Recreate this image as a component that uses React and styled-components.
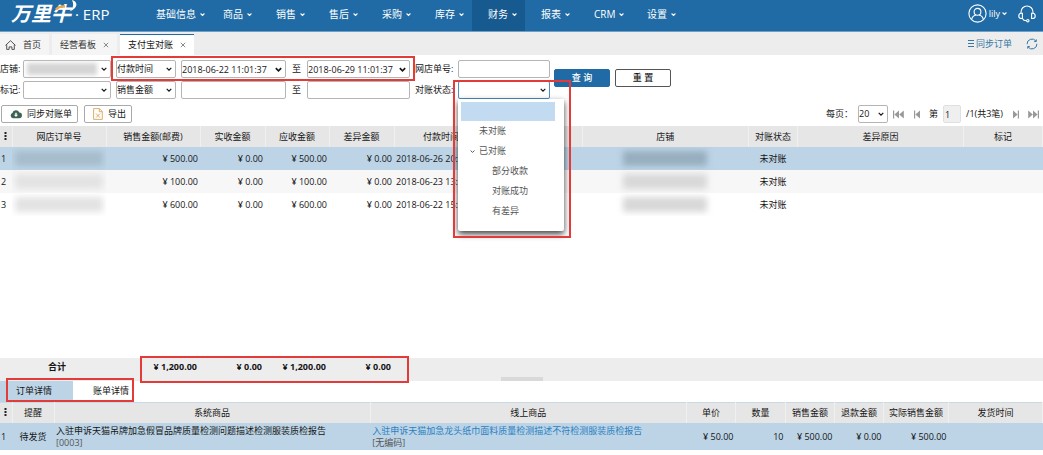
import React, { useState } from "react";
import styled, { createGlobalStyle } from "styled-components";

const GlobalStyle = createGlobalStyle`
  * {
    box-sizing: border-box;
  }

  body {
    margin: 0;
    background: #fff;
    color: #151515;
    font-family: "Open Sans", "Noto Sans CJK SC", sans-serif;
    font-size: 9px;
    line-height: 12px;
  }

  button,
  input,
  select {
    font: inherit;
    color: inherit;
  }
`;

const Page = styled.div`
  display: flex;
  flex-direction: column;
  min-height: 100vh;
  padding-bottom: 5px;
`;

/* ---------- header ---------- */

const Header = styled.header`
  display: flex;
  height: 32px;
  background: #206ba5;
  border-bottom: 1px solid #6f9fc4;
  color: #fff;
`;

const Brand = styled.a`
  position: relative;
  display: flex;
  width: 140px;
  padding-left: 11px;
  color: #fff;
  text-decoration: none;
`;

const BrandName = styled.span`
  width: 64px;
  font-family: "Noto Sans CJK SC", sans-serif;
  font-size: 20px;
  font-style: italic;
  font-weight: 700;
  line-height: 26px;
  white-space: nowrap;
`;

const BrandHorn = styled.svg`
  position: absolute;
  left: 54px;
  top: 0;
`;

const BrandSuffix = styled.span`
  font-size: 15px;
  line-height: 28px;
  white-space: nowrap;
`;

const Nav = styled.nav`
  display: flex;
  flex: 1;
`;

const NavItem = styled.a`
  display: flex;
  align-items: center;
  gap: 4px;
  width: ${(props) => (props.$wide ? "67px" : "53px")};
  padding: 0 0 3px 16px;
  background: ${(props) => (props.$active ? "#165a8f" : "transparent")};
  color: #fff;
  font-size: 10px;
  text-decoration: none;
  white-space: nowrap;
`;

const UserArea = styled.div`
  display: flex;
  align-items: center;
  padding: 0 7px 4px 0;
`;

const UserButton = styled.button`
  display: flex;
  align-items: center;
  gap: 2px;
  margin-right: 11px;
  padding: 0;
  border: 0;
  background: none;
`;

const IconButton = styled.button`
  display: flex;
  align-items: center;
  justify-content: center;
  padding: 0;
  border: 0;
  background: none;
`;

/* ---------- page tabs ---------- */

const TabBar = styled.div`
  display: flex;
  align-items: flex-end;
  height: 23px;
  background: #ededed;
`;

const PageTab = styled.div`
  display: flex;
  align-items: center;
  gap: 7px;
  height: 21px;
  margin-right: 3px;
  padding: 0 ${(props) => (props.$home ? "8px 0 5px" : "8px")};
  border-top: 1px solid ${(props) => (props.$active ? "#206ba5" : "#f5f5f5")};
  background: ${(props) => (props.$active ? "#fff" : "#f5f5f5")};
  color: ${(props) => (props.$active ? "#111" : "#333")};
  white-space: nowrap;
`;

const TabText = styled.button`
  padding: 0;
  border: 0;
  background: none;
`;

const TabTools = styled.div`
  display: flex;
  align-items: center;
  align-self: stretch;
  gap: 14px;
  margin-left: auto;
  padding-right: 5px;
  color: #3878a5;
`;

const SyncLink = styled.a`
  display: flex;
  align-items: center;
  gap: 2px;
  color: #3878a5;
  text-decoration: none;
`;

/* ---------- filters ---------- */

const Filters = styled.form`
  display: flex;
  align-items: center;
  gap: 4px;
  padding-top: 5px;
`;

const FilterRows = styled.div`
  display: flex;
  flex-direction: column;
  gap: 3px;
`;

const FilterRow = styled.div`
  display: flex;
  align-items: center;
  gap: 5px;
`;

const FieldGroup = styled.div`
  position: relative;
  display: flex;
  align-items: center;
  gap: 5px;
`;

const FieldLabel = styled.label`
  flex: none;
  width: ${(props) => props.$width}px;
  white-space: nowrap;
`;

const RangeText = styled.span`
  width: 11px;
  text-align: center;
`;

const Control = styled.div`
  position: relative;
  flex: none;
  width: ${(props) => props.$width}px;
  height: 18px;

  & > svg {
    position: absolute;
    right: 4px;
    top: 6px;
    pointer-events: none;
  }
`;

const controlFrame = `
  display: block;
  width: 100%;
  height: 18px;
  border-radius: 2px;
  outline: none;
`;

const Select = styled.select`
  ${controlFrame}
  appearance: none;
  padding: 0;
  border: 1px solid ${(props) => (props.$focused ? "#4a8fc5" : "#b5b5b5")};
  background: #fff;
`;

const TextInput = styled.input`
  ${controlFrame}
  padding: 0 ${(props) => (props.$picker ? "15px 0 0" : "1px")};
  border: 1px solid #b5b5b5;
  background: #fff;

  &:disabled {
    border-color: #e0e0e0;
    background: #efefef;
    color: #222;
  }
`;

const StoreMask = styled.span`
  position: absolute;
  left: 4px;
  top: 3px;
  width: 70px;
  height: 12px;
  background: #d5d5d5;
  filter: blur(2px);
`;

const Actions = styled.div`
  display: flex;
  gap: 5px;
  padding-bottom: 4px;
`;

const ActionButton = styled.button`
  width: 56px;
  height: 18px;
  padding: 0;
  border: 1px solid ${(props) => (props.$primary ? "#206ba5" : "#555")};
  border-radius: 2px;
  background: ${(props) => (props.$primary ? "#206ba5" : "#fff")};
  color: ${(props) => (props.$primary ? "#fff" : "#111")};
  font-weight: 500;
`;

const Highlight = styled.div`
  position: absolute;
  z-index: 5;
  inset: ${(props) => props.$inset};
  width: ${(props) => props.$width || "auto"};
  border: 2px solid #e33a3a;
  pointer-events: none;
`;

/* ---------- status menu ---------- */

const StatusMenu = styled.ul`
  position: absolute;
  z-index: 4;
  left: 0;
  top: 18px;
  display: flex;
  flex-direction: column;
  width: 106px;
  height: 132px;
  margin: 0;
  padding: 3px;
  border-radius: 0 0 2px 2px;
  background: #fff;
  box-shadow: 0 3px 6px rgba(0, 0, 0, 0.75);
  color: #555;
  list-style: none;
`;

const StatusOption = styled.li`
  display: flex;
  align-items: center;
  gap: 4px;
  height: 20px;
  padding-left: ${(props) => props.$indent}px;
`;

const StatusBlank = styled(StatusOption)`
  width: 94px;
  height: 19px;
  background: #c2dbf0;
`;

/* ---------- toolbar ---------- */

const Toolbar = styled.div`
  display: flex;
  align-items: center;
  gap: 6px;
  padding: 6px 4px 3px 1px;
`;

const ToolButton = styled.button`
  display: flex;
  align-items: center;
  gap: 5px;
  height: 18px;
  padding: 0 5px 0 8px;
  border: 1px solid #aaa;
  border-radius: 2px;
  background: #fff;
  white-space: nowrap;
`;

const Pager = styled.div`
  display: flex;
  align-items: center;
  gap: 5px;
  margin-left: auto;
  white-space: nowrap;
`;

const PagerButton = styled(IconButton)`
  width: ${(props) => (props.$wide ? "11px" : "15px")};
  color: #999;
`;

/* ---------- tables ---------- */

const GridArea = styled.main`
  flex: 1;
`;

const Table = styled.table`
  width: 100%;
  border-collapse: collapse;
  table-layout: fixed;
`;

const Th = styled.th`
  height: 21px;
  padding: 0;
  border-right: 1px solid #f0f0f0;
  background: #e6e6e6;
  font-weight: 400;
  white-space: nowrap;
`;

const Tr = styled.tr`
  height: ${(props) => (props.$tall ? "27px" : "23px")};
  background: ${(props) => props.$bg || "#fff"};
`;

const Td = styled.td`
  padding: 0 2px;
  overflow: hidden;
  text-align: ${(props) => props.$align || "left"};
  white-space: nowrap;
`;

const IndexTd = styled(Td)`
  padding: 0 1px;
`;

const Mask = styled.span`
  display: block;
  height: 15px;
  margin: 0 1px;
  background: ${(props) => (props.$dark ? "#a6bccc" : "#e3e3e3")};
  filter: blur(3px);
`;

const ShopMask = styled(Mask)`
  width: 84px;
  margin: 0 auto;
  background: ${(props) => (props.$dark ? "#97aebf" : "#d8d8d8")};
`;

const Summary = styled.div`
  position: relative;
  height: 23px;
  background: #ededed;
`;

const SummaryCell = styled.td`
  height: 19px;
  padding: 0 ${(props) => (props.$align ? "4px" : "3px")} 0 0;
  font-weight: 700;
  text-align: ${(props) => props.$align || "right"};
  white-space: nowrap;
`;

const ResizeHandle = styled.div`
  width: 42px;
  height: 4px;
  margin: 0 auto;
  background: #d9d9d9;
`;

const DetailTabs = styled.div`
  position: relative;
  display: flex;
  height: 21px;
`;

const DetailTab = styled.button`
  width: 73px;
  padding: 0 0 0 ${(props) => (props.$active ? "16px" : "20px")};
  border: 0;
  background: ${(props) => (props.$active ? "#bcd4e6" : "#fff")};
  text-align: left;
  white-space: nowrap;
`;

const DetailTable = styled(Table)`
  border-top: 1px solid #c9dae7;
`;

const ProductLink = styled.a`
  color: #2b7fc1;
  text-decoration: none;
`;

const ProductCode = styled.div`
  color: #555;
`;

/* ---------- icons ---------- */

const Chevron = ({ size = 6, width = 1.2 }) => (
  <svg width={size} height={size} viewBox="0 0 6 6" fill="none" stroke="currentColor" strokeWidth={width}>
    <path d="M.7 1.8 3 4.1 5.3 1.8" />
  </svg>
);

const UserIcon = () => (
  <svg width="19" height="19" viewBox="0 0 19 19" fill="none" stroke="currentColor" strokeWidth="1.1">
    <circle cx="9.5" cy="9.5" r="8.6" />
    <circle cx="9.5" cy="7.8" r="3.4" />
    <path d="M3.6 15.7c.5-3 2.2-4.2 4.3-4.7M15.4 15.7c-.5-3-2.2-4.2-4.3-4.7" />
  </svg>
);

const HeadsetIcon = () => (
  <svg width="18" height="18" viewBox="0 0 18 18" fill="none" stroke="currentColor" strokeWidth="1.1">
    <path d="M3 8.4V7a6 6 0 0 1 12 0v1.4" />
    <path d="M4.4 8.3v5.2h-.9c-1.7 0-2.7-1.1-2.7-2.6s1-2.6 2.7-2.6zM13.6 8.3v5.2h.9c1.7 0 2.7-1.1 2.7-2.6s-1-2.6-2.7-2.6z" />
    <path d="M4.4 13.5c.7 1.4 2.2 2.2 4 2.2" />
    <circle cx="9.8" cy="15.7" r="1.2" />
  </svg>
);

const HomeIcon = () => (
  <svg width="11" height="10" viewBox="0 0 11 10" fill="none" stroke="#444" strokeWidth=".9">
    <path d="M.5 5.4 5.5.7l5 4.7M1.7 4.5v4.9h2.4V6.9h2.8v2.5h2.4V4.5" />
  </svg>
);

const CloseIcon = () => (
  <svg width="6" height="6" viewBox="0 0 6 6" stroke="#888" strokeWidth="1">
    <path d="M.8.8 5.2 5.2M5.2.8.8 5.2" />
  </svg>
);

const ListIcon = () => (
  <svg width="6" height="7" viewBox="0 0 6 7" stroke="currentColor" strokeWidth="1">
    <path d="M0 .5h6M0 3.5h6M0 6.5h6" />
  </svg>
);

const RefreshIcon = () => (
  <svg width="12" height="12" viewBox="0 0 12 12" fill="none" stroke="currentColor" strokeWidth="1">
    <path d="M1.1 6.2A4.9 4.9 0 0 1 9.9 3M10.9 5.8A4.9 4.9 0 0 1 2.1 9" />
    <path d="M8.2 3.6 10.3 3.5V1.4M3.8 8.4 1.7 8.5v2.1" />
  </svg>
);

const CloudIcon = () => (
  <svg width="12" height="10" viewBox="0 0 12 10">
    <path fill="#3c6354" d="M3 9.2A2.7 2.7 0 0 1 2.4 4 3.6 3.6 0 0 1 9.3 3.6 2.8 2.8 0 0 1 9 9.2z" />
    <path fill="#fff" d="M5.3 3.8h1.4v1.9h1.4L6 8 3.9 5.7h1.4z" />
  </svg>
);

const ExportIcon = () => (
  <svg width="10" height="12" viewBox="0 0 10 12" fill="none" stroke="#d9a658" strokeWidth=".9">
    <path d="M.6.6h5.8l2.9 3v7.8H.6zM6.3.6v3.1h3M3 5.5l4 4.2M7 5.5 3 9.7" />
  </svg>
);

const DotsIcon = () => (
  <svg width="3" height="8" viewBox="0 0 3 8" fill="#222">
    <path d="M.5 0h2v2h-2zM.5 3h2v2h-2zM.5 6h2v2h-2z" />
  </svg>
);

const StepIcon = ({ double, forward }) => {
  const width = double ? 11 : 6;
  return (
    <svg width={width} height="9" viewBox={`0 0 ${width} 9`} fill="currentColor">
      <g transform={forward ? `matrix(-1 0 0 1 ${width} 0)` : undefined}>
        <path d="M0 .5h1.2v8H0zM6 .5v8L1.4 4.5z" />
        {double && <path d="M10.8.5v8L6.2 4.5z" />}
      </g>
    </svg>
  );
};

/* ---------- data ---------- */

const menus = ["基础信息", "商品", "销售", "售后", "采购", "库存", "财务", "报表", "CRM", "设置"];

const orderColumns = [
  { title: "网店订单号", width: 94 },
  { title: "销售金额(邮费)", width: 94 },
  { title: "实收金额", width: 65 },
  { title: "应收金额", width: 64 },
  { title: "差异金额", width: 65 },
  { title: "付款时间", width: 94 },
  { title: "", width: 94 },
  { title: "店铺" },
  { title: "对账状态", width: 49 },
  { title: "差异原因", width: 166 },
  { title: "标记", width: 79 },
];

const orders = [
  { amount: "¥ 500.00", diff: "¥ 0.00", time: "2018-06-26 20:14:52", bg: "#bcd4e6" },
  { amount: "¥ 100.00", diff: "¥ 0.00", time: "2018-06-23 13:40:16", bg: "#f7f7f7" },
  { amount: "¥ 600.00", diff: "¥ 0.00", time: "2018-06-22 15:22:08", bg: "#fff" },
];

const detailColumns = [
  { title: "提醒", width: 42 },
  { title: "系统商品" },
  { title: "线上商品" },
  { title: "单价", width: 49 },
  { title: "数量", width: 50 },
  { title: "销售金额", width: 49 },
  { title: "退款金额", width: 49 },
  { title: "实际销售金额", width: 65 },
  { title: "发货时间", width: 94 },
];

const Columns = ({ columns }) => (
  <colgroup>
    <col width="12" />
    {columns.map((column, i) => (
      <col key={i} width={column.width} />
    ))}
  </colgroup>
);

const HeadRow = ({ columns }) => (
  <thead>
    <tr>
      <Th aria-label="列设置">
        <DotsIcon />
      </Th>
      {columns.map((column, i) => (
        <Th key={i}>{column.title}</Th>
      ))}
    </tr>
  </thead>
);

const Dropdown = ({ width, text = "", focused, children, ...rest }) => (
  <Control $width={width}>
    <Select $focused={focused} {...rest}>
      <option>{text}</option>
    </Select>
    <Chevron />
    {children}
  </Control>
);

const DatePicker = ({ width, label, initial }) => {
  const [value, setValue] = useState(initial);
  return (
    <Control $width={width}>
      <TextInput $picker aria-label={label} value={value} onChange={(e) => setValue(e.target.value)} />
      <Chevron size={7} width={1.4} />
    </Control>
  );
};

const TopHeader = () => (
  <Header>
    <Brand href="#">
      <BrandName>万里牛</BrandName>
      <BrandHorn width="24" height="16" viewBox="0 0 24 16" fill="none">
        <path d="M18 0c6 1.5 6.5 8-2.5 11.5 4-3.500 4.5-7.5 2.5-11.5z" fill="#fff" />
        <path d="M2 9.5c2-2.5 4.5-3.5 9-3" stroke="#e9a64a" strokeWidth="2.4" />
      </BrandHorn>
      <BrandSuffix>· ERP</BrandSuffix>
    </Brand>
    <Nav>
      {menus.map((menu, i) => (
        <NavItem key={menu} href="#" $wide={i === 0} $active={menu === "财务"}>
          {menu}
          <Chevron size={5} width={1.3} />
        </NavItem>
      ))}
    </Nav>
    <UserArea>
      <UserButton>
        <UserIcon />
        lily
        <Chevron size={5} width={1.3} />
      </UserButton>
      <IconButton aria-label="客服">
        <HeadsetIcon />
      </IconButton>
    </UserArea>
  </Header>
);

const PageTabs = () => (
  <TabBar>
    <PageTab $home>
      <HomeIcon />
      <TabText>首页</TabText>
    </PageTab>
    <PageTab>
      <TabText>经营看板</TabText>
      <IconButton aria-label="关闭经营看板">
        <CloseIcon />
      </IconButton>
    </PageTab>
    <PageTab $active>
      <TabText>支付宝对账</TabText>
      <IconButton aria-label="关闭支付宝对账">
        <CloseIcon />
      </IconButton>
    </PageTab>
    <TabTools>
      <SyncLink href="#">
        <ListIcon />
        同步订单
      </SyncLink>
      <IconButton aria-label="刷新">
        <RefreshIcon />
      </IconButton>
    </TabTools>
  </TabBar>
);

const FilterBar = () => (
  <Filters onSubmit={(e) => e.preventDefault()}>
    <FilterRows>
      <FilterRow>
        <FieldLabel $width={18} htmlFor="store">店铺:</FieldLabel>
        <Dropdown id="store" width={88}>
          <StoreMask />
        </Dropdown>
        <FieldGroup>
          <Dropdown width={60} text="付款时间" aria-label="时间类型" />
          <DatePicker width={105} label="开始时间" initial="2018-06-22 11:01:37" />
          <RangeText>至</RangeText>
          <DatePicker width={103} label="结束时间" initial="2018-06-29 11:01:37" />
          <Highlight $inset="-4px -5px -3px -5px" />
        </FieldGroup>
        <FieldLabel $width={38} htmlFor="order-no">网店单号:</FieldLabel>
        <Control $width={92}>
          <TextInput id="order-no" />
        </Control>
      </FilterRow>
      <FilterRow>
        <FieldLabel $width={18} htmlFor="mark">标记:</FieldLabel>
        <Dropdown id="mark" width={88} />
        <FieldGroup>
          <Dropdown width={60} text="销售金额" aria-label="金额类型" />
          <Control $width={105}>
            <TextInput aria-label="最小金额" />
          </Control>
          <RangeText>至</RangeText>
          <Control $width={103}>
            <TextInput aria-label="最大金额" />
          </Control>
        </FieldGroup>
        <FieldLabel $width={38} htmlFor="status">对账状态:</FieldLabel>
        <Dropdown id="status" width={92} focused>
          <StatusMenu>
            <StatusBlank />
            <StatusOption $indent={18}>未对账</StatusOption>
            <StatusOption $indent={9}>
              <Chevron size={5} />
              已对账
            </StatusOption>
            <StatusOption $indent={31}>部分收款</StatusOption>
            <StatusOption $indent={31}>对账成功</StatusOption>
            <StatusOption $indent={31}>有差异</StatusOption>
          </StatusMenu>
          <Highlight $inset="-1px -21px -139px -5px" />
        </Dropdown>
      </FilterRow>
    </FilterRows>
    <Actions>
      <ActionButton $primary type="submit">查 询</ActionButton>
      <ActionButton type="reset">重 置</ActionButton>
    </Actions>
  </Filters>
);

const GridToolbar = () => (
  <Toolbar>
    <ToolButton>
      <CloudIcon />
      同步对账单
    </ToolButton>
    <ToolButton>
      <ExportIcon />
      导出
    </ToolButton>
    <Pager>
      <label htmlFor="page-size">每页：</label>
      <Dropdown id="page-size" width={30} text="20" />
      <PagerButton $wide aria-label="首页">
        <StepIcon double />
      </PagerButton>
      <PagerButton aria-label="上一页">
        <StepIcon />
      </PagerButton>
      <label htmlFor="page-no">第</label>
      <Control $width={18}>
        <TextInput id="page-no" defaultValue="1" disabled />
      </Control>
      <span>/1(共3笔)</span>
      <PagerButton aria-label="下一页">
        <StepIcon forward />
      </PagerButton>
      <PagerButton $wide aria-label="末页">
        <StepIcon double forward />
      </PagerButton>
    </Pager>
  </Toolbar>
);

const OrderTable = () => (
  <Table>
    <Columns columns={orderColumns} />
    <HeadRow columns={orderColumns} />
    <tbody>
      {orders.map((order, i) => (
        <Tr key={order.time} $bg={order.bg}>
          <IndexTd>{i + 1}</IndexTd>
          <Td>
            <Mask $dark={i === 0} />
          </Td>
          <Td $align="right">{order.amount}</Td>
          <Td $align="right">¥ 0.00</Td>
          <Td $align="right">{order.amount}</Td>
          <Td $align="right">{order.diff}</Td>
          <Td>{order.time}</Td>
          <Td />
          <Td>
            <ShopMask $dark={i === 0} />
          </Td>
          <Td $align="center">未对账</Td>
          <Td />
          <Td />
        </Tr>
      ))}
    </tbody>
  </Table>
);

const SummaryBar = () => (
  <Summary>
    <Table>
      <Columns columns={orderColumns} />
      <tbody>
        <tr>
          <SummaryCell />
          <SummaryCell $align="center">合计</SummaryCell>
          <SummaryCell>¥ 1,200.00</SummaryCell>
          <SummaryCell>¥ 0.00</SummaryCell>
          <SummaryCell>¥ 1,200.00</SummaryCell>
          <SummaryCell>¥ 0.00</SummaryCell>
          <SummaryCell colSpan={6} />
        </tr>
      </tbody>
    </Table>
    <ResizeHandle />
    <Highlight $inset="-2px auto -2px 140px" $width="269px" />
  </Summary>
);

const Details = () => (
  <section>
    <DetailTabs>
      <DetailTab $active>订单详情</DetailTab>
      <DetailTab>账单详情</DetailTab>
      <Highlight $inset="-3px auto 0 6px" $width="128px" />
    </DetailTabs>
    <DetailTable>
      <Columns columns={detailColumns} />
      <HeadRow columns={detailColumns} />
      <tbody>
        <Tr $tall $bg="#bcd4e6">
          <IndexTd>1</IndexTd>
          <Td $align="center">待发货</Td>
          <Td>
            <div>入驻申诉天猫吊牌加急假冒品牌质量检测问题描述检测服装质检报告</div>
            <ProductCode>[0003]</ProductCode>
          </Td>
          <Td>
            <ProductLink href="#">入驻申诉天猫加急龙头纸巾面料质量检测描述不符检测服装质检报告</ProductLink>
            <ProductCode>[无编码]</ProductCode>
          </Td>
          <Td $align="right">¥ 50.00</Td>
          <Td $align="right">10</Td>
          <Td $align="right">¥ 500.00</Td>
          <Td $align="right">¥ 0.00</Td>
          <Td $align="right">¥ 500.00</Td>
          <Td />
        </Tr>
      </tbody>
    </DetailTable>
  </section>
);

export default function App() {
  return (
    <Page>
      <GlobalStyle />
      <TopHeader />
      <PageTabs />
      <FilterBar />
      <GridToolbar />
      <GridArea>
        <OrderTable />
      </GridArea>
      <SummaryBar />
      <Details />
    </Page>
  );
}
